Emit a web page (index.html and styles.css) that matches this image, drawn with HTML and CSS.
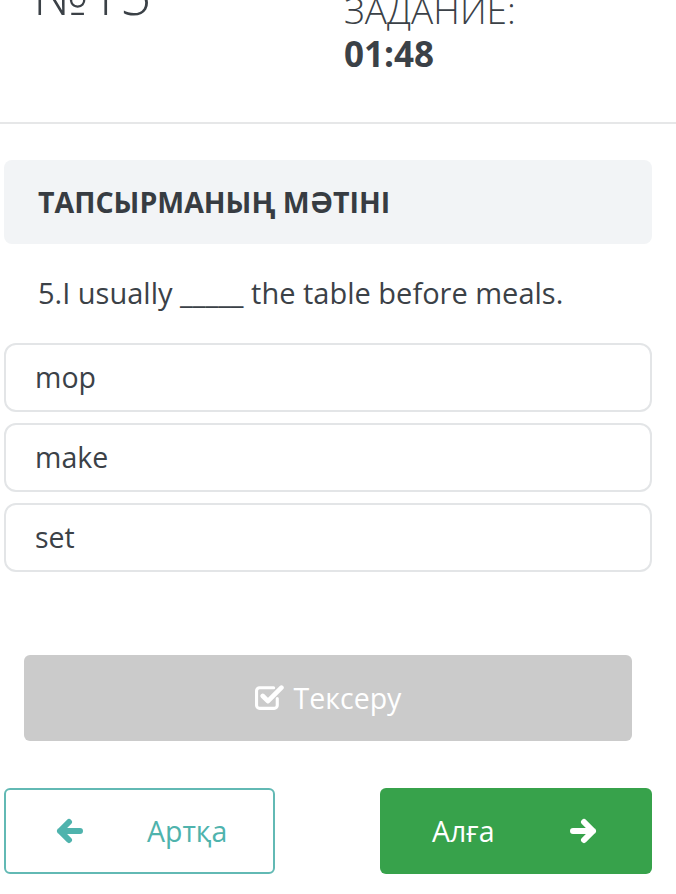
FILE: index.html
```html
<!DOCTYPE html>
<html lang="kk">
<head>
<meta charset="utf-8">
<title>Тапсырма</title>
<link rel="stylesheet" href="styles.css">
</head>
<body>
<header class="head">
  <div class="num">№15</div>
  <div class="timer">
    <div class="timer-label">ЗАДАНИЕ:</div>
    <div class="timer-value">01:48</div>
  </div>
</header>
<main class="main">
  <div class="task-title">ТАПСЫРМАНЫҢ МӘТІНІ</div>
  <p class="question">5.I usually _____ the table before meals.</p>
  <div class="options">
    <div class="option">mop</div>
    <div class="option">make</div>
    <div class="option">set</div>
  </div>
  <div class="check-wrap">
    <button class="check">
      <svg class="check-ico" viewBox="0 0 28 28" width="29" height="29"><path d="M21.5 16v6.5a3 3 0 0 1-3 3H4.5a3 3 0 0 1-3-3V8.5a3 3 0 0 1 3-3H18" fill="none" stroke="#fff" stroke-width="3" stroke-linecap="round"/><path d="M7.5 13.5l5 5L25.5 5.5" fill="none" stroke="#fff" stroke-width="4.5" stroke-linecap="round" stroke-linejoin="round"/></svg>
      <span>Тексеру</span>
    </button>
  </div>
  <nav class="nav">
    <button class="btn back">
      <svg class="arrow" viewBox="0 0 28 26" width="28" height="26"><path d="M25 13H5M14 4l-9 9 9 9" fill="none" stroke="#4fb3ad" stroke-width="6" stroke-linecap="round" stroke-linejoin="round"/></svg>
      <span class="back-txt">Артқа</span>
    </button>
    <button class="btn fwd">
      <span class="fwd-txt">Алға</span>
      <svg class="arrow" viewBox="0 0 28 26" width="28" height="26"><path d="M3 13h20M14 4l9 9-9 9" fill="none" stroke="#fff" stroke-width="6" stroke-linecap="round" stroke-linejoin="round"/></svg>
    </button>
  </nav>
</main>
</body>
</html>
```
FILE: styles.css
```css
html, body {
  margin: 0;
  padding: 0;
  background: #fff;
}
body {
  font-family: "Open Sans", "Noto Sans", "DejaVu Sans", sans-serif;
  color: #3b4147;
  width: 676px;
  overflow: hidden;
}
.head {
  display: flex;
  align-items: flex-start;
  margin-top: -36px;
  height: 158px;
  border-bottom: 2px solid #e6e7e8;
}
.num {
  width: 311px;
  padding-left: 33px;
  font-size: 55px;
  font-weight: 300;
  line-height: 60px;
}
.timer {
  margin-top: 24px;
}
.timer-label {
  font-size: 37px;
  font-weight: 300;
  line-height: 44px;
}
.timer-value {
  margin-top: 2px;
  font-size: 35px;
  font-weight: 700;
  line-height: 40px;
}
.main {
  padding: 36px 24px 0 4px;
}
.task-title {
  background: #f2f4f6;
  border-radius: 8px;
  height: 84px;
  display: flex;
  align-items: center;
  padding-left: 34px;
  font-size: 28.5px;
  font-weight: 700;
  color: #373c42;
}
.question {
  margin: 0;
  padding: 29px 0 0 34px;
  font-size: 29px;
  line-height: 40px;
  height: 72px;
  box-sizing: border-box;
}
.options {
  display: flex;
  flex-direction: column;
  gap: 11px;
  margin-top: 27px;
}
.option {
  height: 69px;
  box-sizing: border-box;
  border: 2px solid #e3e5e7;
  border-radius: 12px;
  padding-left: 29px;
  font-size: 28.5px;
  line-height: 64px;
  color: #3b4147;
}
.check-wrap {
  padding: 83px 20px 0 20px;
}
.check {
  width: 100%;
  height: 86px;
  border: none;
  border-radius: 6px;
  background: #cbcbcb;
  color: #fff;
  font-family: inherit;
  font-size: 28.5px;
  display: flex;
  align-items: center;
  justify-content: center;
  gap: 10px;
}
.check-ico {
  margin-top: -4px;
}
.nav {
  display: flex;
  justify-content: space-between;
  margin-top: 47px;
}
.btn {
  width: 272px;
  height: 86px;
  box-sizing: border-box;
  border-radius: 6px;
  font-family: inherit;
  font-size: 28.5px;
  display: flex;
  align-items: center;
  padding: 0;
}
.back {
  width: 271px;
  background: #fff;
  border: 2px solid #62b9b4;
  color: #4fb3ad;
  padding-left: 49px;
}
.back-txt {
  margin-left: 64px;
}
.fwd {
  background: #37a24b;
  border: none;
  color: #fff;
  padding-left: 52px;
}
.fwd-txt {
  width: 138px;
  text-align: left;
}
```
